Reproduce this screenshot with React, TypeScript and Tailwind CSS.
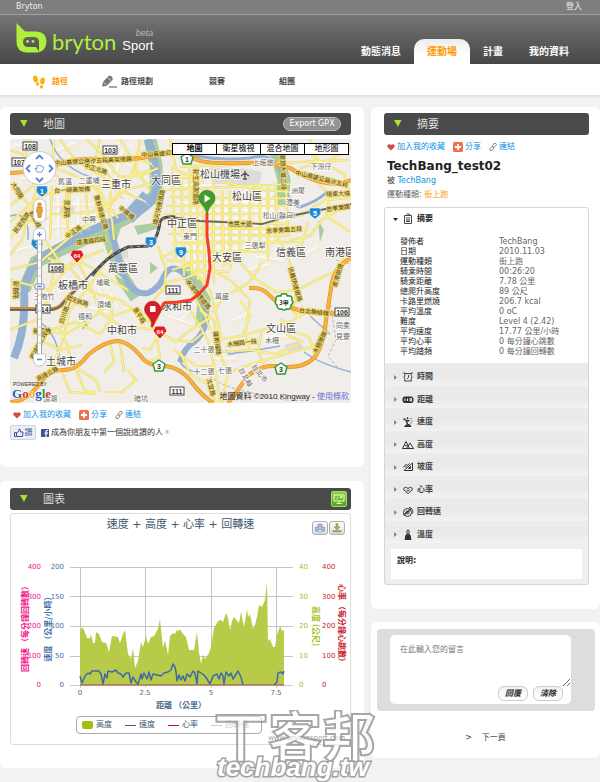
import { useState, type ReactNode } from 'react';

const CJK = '"Noto Sans CJK TC", sans-serif';

interface MapLabel {
  text: string;
  x: number;
  y: number;
  rotate?: number;
}

const DISTRICTS: MapLabel[] = [
  { text: '三重市', x: 116, y: 188 },
  { text: '大同區', x: 166, y: 184 },
  { text: '松山機場', x: 220, y: 178 },
  { text: '松山區', x: 247, y: 200 },
  { text: '中正區', x: 182, y: 227 },
  { text: '大安區', x: 227, y: 261 },
  { text: '信義區', x: 291, y: 256 },
  { text: '南港區', x: 340, y: 256 },
  { text: '萬華區', x: 123, y: 272 },
  { text: '板橋市', x: 73, y: 289 },
  { text: '永和市', x: 177, y: 310 },
  { text: '中和市', x: 122, y: 334 },
  { text: '土城市', x: 61, y: 365 },
  { text: '文山區', x: 281, y: 332 },
];

const PLACES: MapLabel[] = [
  { text: '舊溫', x: 65, y: 184 },
  { text: '二重埔', x: 89, y: 183 },
  { text: '中興', x: 89, y: 222 },
  { text: '埔墘', x: 103, y: 285 },
  { text: '三抱竹', x: 44, y: 299 },
  { text: '頂埔', x: 104, y: 307 },
  { text: '德和', x: 85, y: 319 },
  { text: '頂湖', x: 50, y: 401 },
  { text: '暗坑', x: 141, y: 401 },
  { text: '上塔悠', x: 263, y: 165 },
  { text: '下灣仔', x: 321, y: 169 },
  { text: '洲尾', x: 298, y: 193 },
  { text: '潭美', x: 293, y: 205 },
  { text: '松山(縣口)', x: 279, y: 218 },
  { text: '東門', x: 190, y: 239 },
  { text: '三張犁', x: 255, y: 248 },
  { text: '萬盛', x: 222, y: 299 },
  { text: '二十張', x: 204, y: 352 },
  { text: '十二張', x: 204, y: 374 },
  { text: '七張', x: 225, y: 373 },
  { text: '木柵', x: 272, y: 343 },
  { text: '同柔', x: 343, y: 328 },
  { text: '見寮', x: 343, y: 339 },
  { text: '台北市', x: 260, y: 376, rotate: 52 },
  { text: '台北縣', x: 246, y: 380, rotate: 62 },
];

const ROAD_NAMES: MapLabel[] = [
  { text: '中山高速公路汐五段高架道路', x: 93, y: 163, rotate: -3 },
  { text: '中山高速公', x: 156, y: 156, rotate: -4 },
  { text: '中正北路', x: 96, y: 171, rotate: 18 },
  { text: '台一線高架橋', x: 72, y: 192, rotate: -3 },
  { text: '思源路', x: 68, y: 212, rotate: 90 },
  { text: '中正路', x: 73, y: 234, rotate: -35 },
  { text: '重新高速公路', x: 102, y: 215, rotate: 74 },
  { text: '中興橋', x: 127, y: 215, rotate: 38 },
  { text: '環河快速道路', x: 158, y: 210, rotate: -78 },
  { text: '環漢路四段', x: 91, y: 243, rotate: -8 },
  { text: '大同路', x: 18, y: 193, rotate: 60 },
  { text: '民安西路', x: 21, y: 225, rotate: -55 },
  { text: '新莊路', x: 36, y: 222, rotate: 62 },
  { text: '新樹路', x: 17, y: 293, rotate: 90 },
  { text: '民族路', x: 80, y: 304, rotate: 18 },
  { text: '四川路二段', x: 65, y: 312, rotate: -72 },
  { text: '新海橋', x: 42, y: 333 },
  { text: '擺接路二段', x: 38, y: 348, rotate: -62 },
  { text: '高速公路', x: 47, y: 376, rotate: -28 },
  { text: '新生高架道路', x: 197, y: 190, rotate: 90 },
  { text: '市民大道', x: 240, y: 226 },
  { text: '忠孝東路五段', x: 284, y: 232, rotate: -4 },
  { text: '中山高速公路汐五段', x: 322, y: 181, rotate: 14 },
  { text: '堤頂大道二段', x: 284, y: 175, rotate: 88 },
  { text: '環東大道', x: 338, y: 196, rotate: -3 },
  { text: '忠孝東路', x: 338, y: 210, rotate: -8 },
  { text: '信義快速道路', x: 296, y: 287, rotate: 74 },
  { text: '南港隧道', x: 337, y: 278, rotate: -74 },
  { text: '木柵隧道', x: 319, y: 345, rotate: -64 },
  { text: '台北聯絡線', x: 314, y: 314, rotate: 7 },
  { text: '水源快速道路', x: 199, y: 297, rotate: 52 },
  { text: '景平路', x: 140, y: 318, rotate: 58 },
  { text: '羅斯福路', x: 218, y: 346, rotate: 82 },
  { text: '木柵路一段', x: 242, y: 345, rotate: -7 },
  { text: '北宜路', x: 212, y: 390, rotate: 75 },
];

const PLAIN_ROUTES: MapLabel[] = [
  { text: '108', x: 30, y: 146 },
  { text: '107', x: 19, y: 162 },
  { text: '103', x: 110, y: 150 },
  { text: '106', x: 56, y: 268 },
  { text: '114', x: 43, y: 309 },
  { text: '111', x: 173, y: 290 },
  { text: '111', x: 177, y: 391 },
  { text: '106', x: 342, y: 312 },
];

const BLUE_SHIELDS: MapLabel[] = [
  { text: '1', x: 42, y: 191 },
  { text: '1', x: 37, y: 244 },
  { text: '3', x: 151, y: 242 },
  { text: '9', x: 181, y: 252 },
  { text: '5', x: 315, y: 213 },
];

const RED_SHIELDS: MapLabel[] = [
  { text: '64', x: 77, y: 256 },
  { text: '64', x: 160, y: 332 },
];

const GREEN_SHIELDS: MapLabel[] = [
  { text: '1', x: 187, y: 159 },
  { text: '3', x: 159, y: 366 },
  { text: '3', x: 281, y: 369 },
];

const HIGHWAYS = [
  'M10 173 Q40 172 60 164 T110 160 Q140 160 172 152 Q185 150 195 159 Q205 164 240 163 T290 168 Q305 178 322 182 T351 180',
  'M10 402 Q25 402 38 386 Q48 370 62 370 Q76 371 88 355 Q105 341 118 341 Q130 342 144 360 Q152 367 166 366 Q180 368 190 380 Q200 394 213 403',
  'M228 403 Q240 388 246 378 Q258 365 276 366 Q302 370 314 358 Q324 345 326 320 L332 282 Q336 266 351 258',
  'M249 288 Q262 287 268 294 Q276 303 292 308 Q312 315 345 313',
];

const SMALL_ROADS = [
  'M10 150 L40 160 L70 190 L66 240 L40 262 L10 270',
  'M24 139 L48 165 L90 182 L108 205 L118 218',
  'M10 185 L30 205 L45 240 L60 262',
  'M10 222 L40 196 L72 189 L100 186 L150 170',
  'M60 139 L75 160 L95 172 L120 190 L142 200',
  'M52 214 L92 212 L108 204 L130 182 L138 150',
  'M86 139 L100 152 L118 176 L140 176 L158 168',
  'M40 262 L62 244 L84 226 L104 212 L124 190 L150 184',
  'M30 139 L24 160 L36 190 L22 240 L10 255',
  'M66 192 L68 232 M86 190 L88 226 M52 186 L50 240 M98 186 L112 220 L114 240',
  'M100 139 L96 158 L112 180 L110 200',
  'M120 139 L130 156 L152 164 M140 139 L136 170 L150 190',
  'M10 206 L28 190 L52 166 L54 140',
  'M10 238 L26 222 L50 218',
  'M10 280 L50 290 L72 262 L104 250',
  'M20 403 L44 380 L60 350 L70 310 L94 280 L112 250',
  'M10 330 L36 320 L48 300 L54 270',
  'M48 258 L70 268 L90 292 L120 300 L150 322',
  'M60 270 L82 262 L104 276 L128 290',
  'M78 262 L92 290 L100 312 L120 326 L160 330',
  'M36 330 L66 334 L90 320 L114 300',
  'M30 352 L50 330 L76 322 L100 334 L112 318 L110 296',
  'M58 326 L68 346 L72 366 L96 380 L100 392',
  'M40 340 L60 350 L82 345 M76 368 L84 390 L96 393',
  'M110 342 L114 362 L104 372 M120 342 L124 372',
  'M62 372 L70 392 L96 394 M106 392 L122 392 L136 380 L128 370',
  'M112 316 L138 308 L156 330 L160 358 L146 362',
  'M160 332 L150 350 L142 348 M160 332 L176 342 L190 330 L210 318',
  'M166 300 L190 310 L208 340 L216 374 L220 403',
  'M170 340 L192 342 L204 332 M174 350 L196 366 L214 366',
  'M180 352 L190 374 L208 384 L216 403',
  'M166 260 L186 262 L210 290 L216 312 L222 342',
  'M200 310 L214 320 L218 350 L228 372 L222 403',
  'M216 340 L240 336 L262 330 L290 322 L306 312',
  'M222 352 L250 350 L276 354 L302 342 L286 334',
  'M230 372 L252 364 L300 350 L322 344',
  'M246 330 L250 300 L230 280 L212 270',
  'M262 330 L258 352 L264 364 M240 300 L250 315 L244 332 L250 350',
  'M286 330 L308 336 L316 352 M280 320 L292 324',
  'M280 240 L290 262 L298 290 L292 310 L300 318',
  'M298 290 L316 280 L334 272 L348 252',
  'M298 290 L276 292 L254 278 L240 262',
  'M222 266 L244 250 L262 246 L280 240',
  'M212 312 L226 296 L250 282 L262 262',
  'M154 300 L168 282 L186 278 L206 270',
  'M180 167 L350 160 M290 240 L310 236 L322 220 L351 204',
  'M282 214 L300 216 L325 200 L351 198 M300 168 L330 160 L351 148',
  'M284 146 L310 152 L322 170 M310 139 L318 160 L344 174 L351 200',
  'M318 182 L330 196 L326 216 L351 232 M308 222 L302 244 L290 250',
  'M192 292 L206 318 L210 330 M158 246 L166 270 L164 292',
  'M172 270 L196 262 M160 258 L186 246',
];

const CITY_GRID = [
  'M166 190 L290 184 M170 197 L235 198 M166 206 L290 206 M164 214 L270 214 M164 220 L290 224 M176 228 L296 229',
  'M168 234 L290 236 M172 243 L300 242 M172 252 L270 252 M178 262 L240 262 M186 270 L230 272',
  'M172 166 L176 262 M181 172 L184 276 M189 164 L192 276 M197 166 L198 280 M203 190 L205 284',
  'M213 166 L214 284 M222 190 L224 262 M230 190 L231 270 M240 192 L240 252 M250 184 L250 252',
  'M260 184 L260 250 M268 186 L268 260 M276 184 L278 240 M286 184 L288 236',
  'M166 178 L202 178 M170 139 L176 170 L204 182 M236 200 L290 198 M222 182 L262 190 L290 192',
];

const MINOR_STREETS =
  'M14 145h22M20 178h40M16 250l30 -8M56 150l20 -8M110 145v28M122 150l-8 30M62 276l34 22M58 292l28 -18M88 268l22 40M96 262l26 16M66 300l40 12M104 282l14 24M122 300l18 24M168 316l24 8M180 320l12 -12M210 358h26M184 374l16 16M232 320l18 -8M264 336h28M254 256l30 4M244 270l24 -6M300 256l18 -10M176 185h54M178 202h80M186 210h88M186 218h60M194 226v50M209 190v80M218 200v60M226 196v68M236 206v44M246 190v58M256 188v52M264 190v50M272 190v50M178 238h64M178 248h80M190 258h44M48 196v40M58 196v40M78 196v36M50 204h44M50 226h38M120 160l30 20M130 145l24 22M128 190l18 12';

const TRACK = 'M207 214 L207 236 L209 251 L210 268 L207 285 L199 294 L191 300 L178 302 L164 303 L152 326';

const ALTITUDE =
  'M80 685 L80 632 82 627 84 630 87 638 90 638 91 634 93 643 95 643 96 632 99 634 102 642 106 643 109 652 112 636 118 637 120 643 123 634 125 630 128 654 131 659 133 648 135 668 138 661 141 642 143 647 146 636 148 644 151 637 154 636 158 629 160 619 163 648 165 640 168 655 170 636 173 633 175 634 177 630 179 631 180 629 183 634 186 637 189 650 194 650 197 632 199 652 201 664 203 655 205 659 209 653 211 647 214 628 218 621 221 620 223 622 226 613 228 618 230 630 232 621 234 617 239 623 241 612 244 627 247 609 248 617 250 614 253 629 255 625 257 617 259 605 262 607 265 600 267 582 268 641 270 639 273 647 275 647 277 635 280 626 282 631 284 630 L284 685 Z';

const SPEED =
  'M80 676 L82 683 85 676 88 673 90 674 92 671 95 671 99 671 101 674 103 684 105 674 107 678 108 671 112 672 116 670 118 673 121 674 123 677 126 673 129 673 131 683 133 677 136 682 138 684 141 674 142 679 144 673 147 679 149 672 151 680 153 674 157 675 161 676 164 673 168 672 171 670 173 664 175 667 176 672 177 681 179 675 181 680 183 676 185 681 187 674 190 677 193 671 195 673 197 684 198 671 201 673 204 675 207 679 210 684 213 676 217 674 219 679 221 673 223 676 224 684 226 672 229 676 231 673 233 679 235 676 238 671 241 677 243 685 M274 685 L277 682 278 673 281 672 283 674 284 671';

const SPEED_MARKS = [
  { y: 567, left: '200', outer: '400', alt: '40' },
  { y: 597, left: '150', outer: '300', alt: '30' },
  { y: 626, left: '100', outer: '200', alt: '20' },
  { y: 656, left: '50', outer: '100', alt: '10' },
  { y: 685, left: '0', outer: '0', alt: '0' },
];

const DISTANCE_MARKS = [
  { x: 80, label: '0' },
  { x: 145, label: '2.5' },
  { x: 211, label: '5' },
  { x: 276, label: '7.5' },
];

const SUMMARY = [
  ['發佈者', 'TechBang'],
  ['日期', '2010.11.03'],
  ['運動種類', '街上跑'],
  ['騎乘時間', '00:26:20'],
  ['騎乘距離', '7.78 公里'],
  ['總爬升高度', '89 公尺'],
  ['卡路里燃燒', '206.7 kcal'],
  ['平均溫度', '0 oC'],
  ['難度', 'Level 4 (2.42)'],
  ['平均速度', '17.77 公里/小時'],
  ['平均心率', '0 每分鐘心跳數'],
  ['平均踏頻', '0 每分鐘回轉數'],
];

const SECTIONS: { label: string; icon: ReactNode }[] = [
  {
    label: '時間',
    icon: (
      <path
        d="M2.500 2.500h7L9 4l1 2-1 2.500.5 1.500h-7L3 8.500 2 6l1-2zM1 2.500L2.500 1M11 2.500L9.500 1M6.500 4v2.500L5 8"
        strokeWidth="0.900"
      />
    ),
  },
  {
    label: '距離',
    icon: (
      <>
        <rect x="1" y="3" width="10" height="5.500" rx="1.500" fill="#333" />
        <path d="M3 4.500v2.500M5.500 4.500v2.500M8 4.500h1.500v2.500H8z" stroke="#fff" strokeWidth="0.9" />
      </>
    ),
  },
  {
    label: '速度',
    icon: (
      <>
        <path d="M2.500 10.500h6.500L7.500 8.500 4 9z" fill="#333" />
        <path d="M5.500 8.500L4.500 5 1.500 2.500M4.500 5L7.500 4.500M5 1.500L6 3" strokeWidth="1.400" />
        <path d="M8.500 2.500h1M9.500 5h1M8.500 7h1" />
      </>
    ),
  },
  {
    label: '高度',
    icon: <path d="M0.500 9.500L4 2.500l3.500 7zM4.500 9.500L8 4l3.500 5.500zM2.500 6l1.500 1 1.500-1" />,
  },
  {
    label: '坡度',
    icon: <path d="M2 9.500h8.500V2zM6.500 7.500h2V5.500zM1 6.500L4.500 3M3 6.500L7.500 2.500" />,
  },
  {
    label: '心率',
    icon: <path d="M6 9.500L2 6C1 4 3 2 6 4.500 9 2 11 4 10 6zM4.500 6l1.500 1 1.500-1.500" />,
  },
  {
    label: '回轉速',
    icon: (
      <>
        <circle cx="5.500" cy="6.500" r="4" />
        <circle cx="5.500" cy="6.500" r="1.500" />
        <path d="M3 8.500L8.500 4M7 1.500c3 .5 4.500 3 3.500 6M1 9l9-7" />
      </>
    ),
  },
  {
    label: '溫度',
    icon: (
      <>
        <path d="M5 6V1.500q1-1 2 0V6" />
        <path d="M4 6h4l1 4.500H3z" fill="#333" />
        <path d="M6 4v4" />
      </>
    ),
  },
];

function Panel({ children, className = '' }: { children: ReactNode; className?: string }) {
  return <section className={`rounded-md bg-white ${className}`}>{children}</section>;
}

function PanelTitle({ title, children }: { title: string; children?: ReactNode }) {
  return (
    <div className="flex h-[22px] items-center rounded-[3px] bg-[#4a4a4a] pr-1 pl-[10px]">
      <svg viewBox="0 0 8 8" className="h-2 w-2" aria-hidden="true">
        <path d="M0 0h7.500L4 7z" fill="#a6e22e" />
      </svg>
      <h2 className="ml-[15px] flex-1 pt-[2px] text-[11px] leading-4 text-[#dedede]">{title}</h2>
      {children}
    </div>
  );
}

function ActionLinks() {
  return (
    <div className="flex h-3 items-center pl-[3px] text-[8px] leading-3 text-[#0a93e6]">
      <a href="#favorite" className="flex items-center gap-[2px]">
        <svg viewBox="0 0 8 8" className="h-2 w-2" aria-hidden="true">
          <path d="M4 7.500L.5 4C-.5 2 2 0 4 2 6 0 8.500 2 7.500 4z" fill="#d24a43" />
        </svg>
        加入我的收藏
      </a>
      <a href="#share" className="ml-2 flex items-center gap-[2px]">
        <svg viewBox="0 0 10 10" className="h-[10px] w-[10px]" aria-hidden="true">
          <rect width="10" height="10" rx="1.500" fill="#f0714c" />
          <path d="M5 2v6M2 5h6" stroke="#fff" strokeWidth="1.800" />
        </svg>
        分享
      </a>
      <a href="#link" className="ml-2 flex items-center gap-[2px]">
        <svg viewBox="0 0 9 9" className="h-2 w-2" fill="none" stroke="#777" aria-hidden="true">
          <rect x="3.500" y="1" width="5" height="3" rx="1.500" transform="rotate(-42 6 2.500)" />
          <rect x="0.500" y="5" width="5" height="3" rx="1.500" transform="rotate(-42 3 6.500)" />
        </svg>
        連結
      </a>
    </div>
  );
}

function Logo() {
  return (
    <a href="#home" className="flex items-start" aria-label="bryton Sport">
      <svg viewBox="0 0 31 30" className="h-[30px] w-[31px]" aria-hidden="true">
        <path
          fillRule="evenodd"
          fill="#aef03a"
          d="M.5 0L9 8.500H20Q30.500 9 30.500 18.500 30 28 22 29.500H11Q.5 29 .5 19zM12.500 14Q7 14 7 19t5.500 5H20l3 4.500V18.500q-.5-4.500-5-4.500z"
        />
        <circle cx="11.500" cy="18.500" r="1.400" fill="#aef03a" />
        <circle cx="17" cy="18.500" r="1.400" fill="#aef03a" />
      </svg>
      <span className="mt-[9px] ml-[5px] font-[Lato,sans-serif] text-[22px] leading-5 text-[#aef03a]">bryton</span>
      <span className="mt-[6px] ml-[6px] flex flex-col font-['Liberation_Sans',sans-serif]">
        <span className="text-right text-[9px] leading-[9px] text-[#bbb] italic">beta</span>
        <span className="text-[13px] leading-4 text-white">Sport</span>
      </span>
    </a>
  );
}

function Header() {
  return (
    <header>
      <div className="flex h-[15px] items-center justify-between border-b border-[#a0a0a0] bg-[#7e7e7e] pr-[18px] pl-4 text-[8px] text-[#eee]">
        <a href="#bryton">Bryton</a>
        <a href="#login">登入</a>
      </div>
      <div className="flex h-[49px] justify-between bg-linear-to-b from-[#757575] to-[#474747] pr-[18px] pl-4">
        <div className="pt-2">
          <Logo />
        </div>
        <nav className="flex items-end text-[10px] font-bold text-white" aria-label="主選單">
          <a href="#news" className="flex h-[25px] items-center px-[13px]">動態消息</a>
          <a
            href="#field"
            aria-current="page"
            className="flex h-[25px] items-center rounded-t-[10px] bg-linear-to-b from-[#ececec] to-white to-60% px-[13px] text-[#ff9800]"
          >
            運動場
          </a>
          <a href="#plan" className="flex h-[25px] items-center px-[13px]">計畫</a>
          <a href="#profile" className="flex h-[25px] items-center px-[13px]">我的資料</a>
        </nav>
      </div>
      <nav
        className="flex h-[31px] items-center bg-white pt-1 pl-8 text-[8px] font-bold text-[#444] shadow-[0_1px_3px_rgba(0,0,0,0.12)]"
        aria-label="運動場"
      >
        <a href="#route" className="flex w-[69px] items-center gap-[6px] text-[#ff9800]">
          <svg viewBox="0 0 14 14" className="h-[14px] w-[14px]" fill="#ffb000" aria-hidden="true">
            <ellipse cx="3.500" cy="4" rx="2.300" ry="3.500" transform="rotate(-12 3.500 4)" />
            <ellipse cx="5.500" cy="9" rx="1.500" ry="1.700" />
            <ellipse cx="10.500" cy="6" rx="2.300" ry="3.500" transform="rotate(10 10.500 6)" />
            <ellipse cx="9.500" cy="12" rx="1.600" ry="1.700" />
          </svg>
          路徑
        </a>
        <a href="#planner" className="flex w-[108px] items-center gap-1">
          <svg viewBox="0 0 16 14" className="h-[14px] w-4" aria-hidden="true">
            <path d="M1 11.500L2 7 7.500 1q1-1 3 .5T11.500 5L5.500 11z" fill="#777" />
            <path d="M3 7.500l2.500 2.500M6.500 2.500L10 5.500" stroke="#ddd" />
            <path d="M8 12h8" stroke="#888" strokeWidth="1.500" />
          </svg>
          路徑規劃
        </a>
        <a href="#race" className="w-[70px]">競賽</a>
        <a href="#group">組團</a>
      </nav>
    </header>
  );
}

function MapText({ items, size, color, halo = '#fff' }: { items: MapLabel[]; size: number; color: string; halo?: string }) {
  return (
    <g
      fontFamily={CJK}
      fontSize={size}
      fill={color}
      textAnchor="middle"
      stroke={halo}
      strokeWidth="2"
      strokeOpacity="0.75"
      paintOrder="stroke"
    >
      {items.map(({ text, x, y, rotate }) => (
        <text key={`${text}-${x}`} x={x} y={y} transform={rotate ? `rotate(${rotate} ${x} ${y - 3})` : undefined}>
          {text}
        </text>
      ))}
    </g>
  );
}

function RouteMap() {
  const [mode, setMode] = useState('地圖');

  return (
    <div className="relative mt-1 overflow-hidden rounded-[3px]">
      <svg viewBox="10 139 341 264" className="block w-full" role="img" aria-label="路線地圖" fill="none">
        <rect x="10" y="139" width="341" height="264" fill="#f1ede8" />
        <path
          d="M206 168 Q240 166 262 172 L260 184 L214 188z M60 206h14v8h-14z M118 250h10v8h-10z M270 196l14-4 4 10z M284 345l16-4 4 8-16 4z M176 145h22v10z"
          fill="#dedcda"
        />
        <path
          d="M150 139 L156 165 156 195 130 216 92 236 60 250 36 262 24 290 M116 222 L110 240 122 276 136 298 M186 268 L204 300 202 326 M276 152 L284 180 282 206"
          stroke="#a9cda0"
          strokeWidth="13"
        />
        <path d="M318 220l6 10-4 12zM84 316l4 10-6 4zM134 226l20-3 8 4-24 8zM150 262l8 6-8 6z" fill="#a9cda0" />
        <g stroke="#94b0d2">
          <path
            d="M148 139 Q155 160 157 180 Q158 200 140 210 Q110 222 92 230 Q60 246 44 256 Q28 266 24 294 Q26 330 14 358"
            strokeWidth="8"
          />
          <path
            d="M110 225 Q116 250 122 272 Q132 296 148 293 Q160 288 164 276 Q172 262 184 274 Q202 292 206 320 Q204 334 194 342 Q184 348 180 362"
            strokeWidth="6"
          />
          <path d="M148 196l-20 22" strokeWidth="14" />
          <path d="M176 150 Q205 162 250 158 Q274 152 280 172 Q288 206 300 207 Q316 202 326 193" strokeWidth="3" />
          <path
            d="M50 139 Q60 170 100 180 M180 362 Q186 372 200 372 M228 354 Q260 350 280 346 M304 352 Q320 364 351 372 M10 216 Q30 210 28 240 M36 320 Q56 330 60 360 M226 350q4 8 14 0 M310 316l20 18"
            strokeWidth="1.500"
          />
        </g>
        <path d="M336 260l15 4M330 300l6 40-8 16 10 12M210 376q14 12 40 16 26 10 60 8M104 178l20 22" stroke="#b5b1ad" strokeDasharray="3 2" />
        <path d={MINOR_STREETS} stroke="#fff" strokeWidth="1" />
        <path d={MINOR_STREETS} stroke="#f3e88c" strokeWidth="0.6" transform="translate(3 3)" />
        {[...SMALL_ROADS, ...CITY_GRID].map((d) => (
          <path key={d} d={d} stroke="#d9cc78" strokeWidth="2.200" strokeLinejoin="round" />
        ))}
        {[...SMALL_ROADS, ...CITY_GRID].map((d) => (
          <path key={d} d={d} stroke="#fbf184" strokeWidth="1.600" strokeLinejoin="round" />
        ))}
        <path d="M10 309 H44 Q58 311 64 302 Q74 290 82 284" stroke="#c98f30" strokeWidth="4" />
        <path
          d="M10 310 H46 Q58 311 64 302 L84 282 Q100 262 128 247 L148 246 Q157 242 160 222 Q162 216 170 217 L200 221 L262 224 L290 216 L351 204"
          stroke="#6b6764"
          strokeWidth="1.800"
        />
        <path d="M92 276 Q106 256 128 247 L148 246 Q157 242 160 222 Q162 216 175 217" stroke="#4c4a4c" strokeWidth="3" />
        <path d="M92 276 Q106 256 128 247 L148 246 Q157 242 160 222 Q162 216 175 217" stroke="#aaa" strokeDasharray="3 4" />
        {HIGHWAYS.map((d) => (
          <path key={d} d={d} stroke="#cf8b2b" strokeWidth="4" />
        ))}
        {HIGHWAYS.map((d) => (
          <path key={d} d={d} stroke="#f9b13c" strokeWidth="3" />
        ))}

        <MapText items={ROAD_NAMES} size={6} color="#4a3c10" halo="#f6df70" />
        <MapText items={PLACES} size={7} color="#666" />
        <MapText items={DISTRICTS} size={10} color="#444" />
        <path d="M245 171v8M241 176l4-3 4 3M243 179h4" stroke="#555" strokeWidth="1.400" />

        <g fontFamily="Liberation Sans" fontSize="7" fontWeight="bold" textAnchor="middle">
          {PLAIN_ROUTES.map(({ text, x, y }) => (
            <g key={`${x}-${y}`}>
              <rect x={x - 7} y={y - 4} width="14" height="8" fill="#fff" stroke="#444" />
              <text x={x} y={y + 3} fill="#333">{text}</text>
            </g>
          ))}
          {BLUE_SHIELDS.map(({ text, x, y }) => (
            <g key={`${x}-${y}`}>
              <path d={`M${x - 5} ${y - 5}h10q2 5-1 8l-4 3-4-3q-3-3-1-8z`} fill="#1f86cf" stroke="#fff" strokeWidth="0.5" />
              <text x={x} y={y + 3} fill="#fff">{text}</text>
            </g>
          ))}
          {RED_SHIELDS.map(({ text, x, y }) => (
            <g key={`${x}-${y}`}>
              <path d={`M${x - 4} ${y - 5}h8l2 4-6 7-6-7z`} fill="#e31b23" stroke="#e31b23" strokeLinejoin="round" />
              <text x={x} y={y + 2} fontSize="6" fill="#fff">{text}</text>
            </g>
          ))}
          {GREEN_SHIELDS.map(({ text, x, y }) => (
            <g key={`${x}-${y}`}>
              <path d={`M${x} ${y - 6}l6 4-2 7h-8l-2-7z`} fill="#fff" stroke="#2e9a3c" strokeWidth="1.500" strokeLinejoin="round" />
              <text x={x} y={y + 3} fill="#333">{text}</text>
            </g>
          ))}
          <path
            d="M284 294q3-1 3 2 6-1 5 4 2 3-1 5 0 5-5 4-2 2-4 0-5 1-5-4-3-2-1-5-1-5 5-4 0-3 3-2z"
            fill="#fff"
            stroke="#2e9a3c"
            strokeWidth="1.600"
            strokeLinejoin="round"
          />
          <text x="284" y="305" fontFamily={CJK} fontSize="6" fill="#333">3甲</text>
        </g>

        <path d={TRACK} stroke="#f33b2e" strokeWidth="3" strokeLinejoin="round" strokeLinecap="round" />
        <path d="M207 214Q205 207 201 203.500A8 8 0 1 1 213 203.500Q209 207 207 214z" fill="#3f9c2b" stroke="#2c7a1e" strokeWidth="0.600" />
        <path d="M204.500 194.500v8l6-4z" fill="#fff" />
        <path d="M152.500 326Q151 319 147 315A8 8 0 1 1 158 315Q154 319 152.500 326z" fill="#d51f26" stroke="#a3151b" strokeWidth="0.600" />
        <rect x="150" y="306" width="5.500" height="6" fill="#fff" />

        <g stroke="#c9c9c9">
          <circle cx="39.500" cy="168" r="16.500" fill="#fff" />
          <rect x="33.500" y="199" width="12.500" height="23" rx="6" fill="#fff" />
          <rect x="37.500" y="238" width="4" height="118" fill="#fff" stroke="#aaa" />
          <path d="M37.500 244h4M37.500 252h4M37.500 260h4M37.500 268h4M37.500 276h4M37.500 295h4M37.500 303h4M37.500 311h4M37.500 319h4M37.500 327h4M37.500 335h4M37.500 343h4" />
          <path d="M33.500 240v-6q0-6 6-6t6 6v6z" fill="#fff" />
          <path d="M33.500 354h12v6q-1 6-6 6t-6-6z" fill="#fff" />
          <rect x="35" y="284" width="9" height="5" rx="1" fill="#fff" stroke="#88a" />
        </g>
        <g stroke="#5b86cf" strokeWidth="1.800">
          <path d="M36 159l3.500-3.500 3.500 3.500M36 178l3.500 3.500 3.500-3.500M30 165l-3.500 3.500 3.500 3.500M49 165l3.500 3.500-3.500 3.500" />
          <path d="M37 234.500h5M39.500 232v5M37 359.500h5M37 286.500h5" strokeWidth="1.300" />
          <path d="M37 172l-2-4 2 1v-3q1-2 1.500 0 1-2 2 0 1-1 1.500.5 2-.5 1.500 2l-1.500 3.500z" strokeWidth="0.800" fill="#fff" />
        </g>
        <circle cx="39.500" cy="204.500" r="2.200" fill="#e8932c" />
        <path d="M37 207h5l.5 5-1 .5-.5 5h-3l-.5-5-1-.5z" fill="#f0a030" stroke="#a8641a" strokeWidth="0.500" />

        <text x="13" y="386" fontFamily="Liberation Sans" fontSize="5" fill="#333">POWERED BY</text>
        <text x="12" y="398" fontFamily="Liberation Serif" fontSize="13" fontWeight="bold" stroke="#fff" strokeWidth="1" paintOrder="stroke">
          <tspan fill="#2a56c6">G</tspan>
          <tspan fill="#d8322b">o</tspan>
          <tspan fill="#e8b21a">o</tspan>
          <tspan fill="#2a56c6">g</tspan>
          <tspan fill="#2c9a3c">l</tspan>
          <tspan fill="#d8322b">e</tspan>
        </text>
        <text x="349" y="399" textAnchor="end" fontFamily={`"Liberation Sans", ${CJK}`} fontSize="8" fill="#222">
          地圖資料 ©2010 Kingway - <tspan fill="#6a6ad8">使用條款</tspan>
        </text>
      </svg>
      <div className="absolute top-1 right-[2px] flex text-[8px] leading-[10px] text-black">
        {['地圖', '衛星檢視', '混合地圖', '地形圖'].map((name) => (
          <button
            key={name}
            type="button"
            aria-pressed={mode === name}
            onClick={() => setMode(name)}
            className={`-ml-px h-3 w-[45px] border border-black bg-white ${mode === name ? 'font-bold' : ''}`}
          >
            {name}
          </button>
        ))}
      </div>
    </div>
  );
}

function RideChart() {
  return (
    <div className="relative mt-[3px] rounded-[3px] border border-[#ddd] shadow-[0_0_1px_rgba(0,0,0,0.1)]">
      <h3 className="h-[22px] text-center text-[11px] leading-[22px] text-[#3e576f]">速度 + 高度 + 心率 + 回轉速</h3>
      <div className="absolute top-[7px] right-[5px] flex gap-px">
        <button type="button" aria-label="列印" className="flex h-[14px] w-4 items-center justify-center rounded-[3px] border border-[#b0b0b0] bg-linear-to-b from-white to-[#ddd]">
          <svg viewBox="0 0 10 10" className="h-[10px] w-[10px]" aria-hidden="true">
            <path d="M3 1h4v3h2.500v4H.5V4H3z" fill="#a4bdd8" stroke="#6f8ead" strokeWidth="0.600" />
            <path d="M3 6.500h4V9H3z" fill="#d9e5f0" stroke="#6f8ead" strokeWidth="0.500" />
          </svg>
        </button>
        <button type="button" aria-label="下載" className="flex h-[14px] w-4 items-center justify-center rounded-[3px] border border-[#b0b0b0] bg-linear-to-b from-white to-[#ddd]">
          <svg viewBox="0 0 10 10" className="h-[10px] w-[10px]" aria-hidden="true">
            <path d="M4 .5h2V4h2L5 7 2 4h2zM1 7v2h8V7" fill="#a0af72" stroke="#8a9a58" strokeWidth="0.600" />
          </svg>
        </button>
      </div>
      <svg viewBox="11 536 339 180" className="block w-full" role="img" aria-label="速度與高度圖表" fill="none">
        <path d="M70 567.500H293M70 596.500H293M70 626.500H293M70 656.500H293M80.500 567V685M145.500 567V685M211.500 567V685M276.500 567V685" stroke="#c4c4c4" />
        <path d={ALTITUDE} fill="#b7cb48" />
        <path d={SPEED} stroke="#4169a8" strokeWidth="1.500" strokeLinejoin="round" />
        <path d="M70 685.500H293M80.500 685v3M145.500 685v3M211.500 685v3M276.500 685v3" stroke="#c0d0e0" />
        <path d="M80 685H284" stroke="#b0483c" strokeWidth="1.200" />
        <g fontFamily={`"DejaVu Sans", ${CJK}`} fontSize="7">
          {SPEED_MARKS.map(({ y, left, outer, alt }) => (
            <g key={y}>
              <text x="41" y={y + 2} textAnchor="end" fill="#f0148c">{outer}</text>
              <text x="64" y={y + 2} textAnchor="end" fill="#4572a7">{left}</text>
              <text x="299" y={y + 2} fill="#a5c01c">{alt}</text>
              <text x="322" y={y + 2} fill="#c8232c">{outer}</text>
            </g>
          ))}
          {DISTANCE_MARKS.map(({ x, label }) => (
            <text key={x} x={x} y="695" textAnchor="middle" fill="#666">{label}</text>
          ))}
        </g>
        <g fontFamily={CJK} fontSize="8" fontWeight="bold" textAnchor="middle">
          <text transform="translate(28 627) rotate(-90)" fill="#f0148c">回轉速 （每分鐘回轉數）</text>
          <text transform="translate(51 627) rotate(-90)" fill="#4572a7">速度 （公里/小時）</text>
          <text transform="translate(313 626) rotate(90)" fill="#a5c01c">高度 (公尺)</text>
          <text transform="translate(339 625) rotate(90)" fill="#c8232c">心率 （每分鐘心跳數）</text>
          <text x="181" y="708" fill="#4a6b92">距離 （公里）</text>
        </g>
      </svg>
      <ul className="ml-[65px] flex h-[18px] w-[186px] items-center rounded-[4px] border border-[#aaa] pl-[5px] text-[8px] text-[#3e576f]">
        <li className="flex w-[43px] items-center gap-[3px]">
          <span className="h-2 w-[11px] rounded-[2px] bg-[#a3bd11]" />高度
        </li>
        <li className="flex w-[43px] items-center gap-[3px]">
          <span className="h-px w-[11px] bg-[#2f62a8]" />速度
        </li>
        <li className="flex w-[43px] items-center gap-[3px]">
          <span className="h-px w-[11px] bg-[#d0101c]" />心率
        </li>
        <li className="flex items-center gap-[3px] text-[#ccc]">
          <span className="h-px w-[11px] bg-[#ccc]" />回轉速
        </li>
      </ul>
      <p className="h-[10px] pr-[5px] text-right text-[7px] leading-[9px] text-[#999]">www.brytonsport.com</p>
    </div>
  );
}

function Summary() {
  const [open, setOpen] = useState(true);

  return (
    <div className="mt-[6px] rounded-[3px] border border-[#d6d6d6] bg-[#efefef]">
      <div className="rounded-t-[3px] bg-white pb-[6px]">
        <button
          type="button"
          aria-expanded={open}
          onClick={() => setOpen(!open)}
          className="flex h-[22px] w-full items-center pl-2 text-[8px] font-bold text-[#222]"
        >
          <svg viewBox="0 0 5 5" className="h-[5px] w-[5px]" aria-hidden="true">
            <path d="M0 1h5L2.500 4z" fill="#222" />
          </svg>
          <svg viewBox="0 0 12 12" className="ml-1 h-3 w-3" fill="none" stroke="#444" aria-hidden="true">
            <path d="M2.500 2.500h7v8h-7zM4.500 1h3v1.500M4 5h4M4 7h4M4 8.500h4" />
          </svg>
          <span className="ml-[3px]">摘要</span>
        </button>
        {open && (
          <table className="ml-[15px] text-[8px] leading-[10px]">
            <tbody className="before:block before:h-[7px]">
              {SUMMARY.map(([label, value]) => (
                <tr key={label}>
                  <th scope="row" className="w-[99px] p-0 text-left font-normal text-[#222]">{label}</th>
                  <td className="p-0 whitespace-nowrap text-[#666]">{value}</td>
                </tr>
              ))}
            </tbody>
          </table>
        )}
      </div>
      <ul className="flex h-[180px] flex-col">
        {SECTIONS.map(({ label, icon }) => (
          <li key={label} className="flex-1 bg-linear-to-b from-[#ececec] via-[#e9e9e9] to-[#f2f2f2]">
            <button type="button" aria-expanded="false" className="flex h-full w-full items-center pt-[6px] pl-2 text-[8px] font-bold text-[#444]">
              <svg viewBox="0 0 5 5" className="h-[5px] w-[5px]" aria-hidden="true">
                <path d="M1 0v5l3-2.500z" fill="#888" />
              </svg>
              <svg viewBox="0 0 12 12" className="ml-1 h-3 w-3" fill="none" stroke="#333" aria-hidden="true">
                {icon}
              </svg>
              <span className="ml-[3px]">{label}</span>
            </button>
          </li>
        ))}
      </ul>
      <div className="mx-[6px] mt-[6px] mb-[5px] h-[30px] bg-white px-[6px] pt-[6px] text-[8px] leading-3 font-bold text-[#222]">說明:</div>
    </div>
  );
}

function Comments() {
  return (
    <>
      <form className="mr-[5px] ml-[6px] rounded-[4px] bg-[#ddd] pt-[6px] pr-6 pb-[7px] pl-[13px]" onSubmit={(e) => e.preventDefault()}>
        <div className="rounded-[5px] bg-white pb-[3px]">
          <textarea
            aria-label="留言"
            placeholder="在此輸入您的留言"
            className="block h-[52px] w-full px-[10px] pt-[9px] text-[8px] leading-3 outline-none placeholder:text-[#777]"
          />
          <div className="-mt-px flex justify-end gap-[5px] pr-2">
            <button type="submit" className="h-[15px] w-[30px] rounded-[6px] border border-[#ccc] bg-linear-to-b from-[#f2f2f2] to-white text-[8px] leading-3 font-bold text-[#222] italic">
              回覆
            </button>
            <button type="reset" className="h-[15px] w-[30px] rounded-[6px] border border-[#ccc] bg-linear-to-b from-[#f2f2f2] to-white text-[8px] leading-3 font-bold text-[#222] italic">
              清除
            </button>
          </div>
        </div>
      </form>
      <nav className="mt-[19px] flex h-4 items-center justify-center text-[8px] text-[#444]" aria-label="分頁">
        <a href="#next" className="flex items-center gap-[10px]">
          <span>&gt;</span>
          <span>下一頁</span>
        </a>
      </nav>
    </>
  );
}

function Watermark() {
  return (
    <svg viewBox="0 0 170 72" className="pointer-events-none absolute bottom-0 left-[212px] h-[72px] w-[170px]" aria-hidden="true">
      <text
        x="2"
        y="47"
        fontFamily={CJK}
        fontSize="54"
        fontWeight="bold"
        fill="#fff"
        fillOpacity="0.5"
        stroke="#8a8a8a"
        strokeOpacity="0.75"
        strokeWidth="2"
      >
        丅客邦
      </text>
      <g fontFamily="Liberation Sans" fontSize="26" fontWeight="bold" fontStyle="italic">
        <text x="5" y="66" fill="#a2a2a2" stroke="#a2a2a2" strokeWidth="3">techbang.tw</text>
        <text x="5" y="66" fill="#fff">techbang.tw</text>
      </g>
    </svg>
  );
}

export default function App() {
  return (
    <div className="relative min-h-screen overflow-hidden bg-[#f2f2f2] font-['DejaVu_Sans','Noto_Sans_CJK_TC',sans-serif]">
      <Header />
      <main className="grid grid-cols-[364fr_229fr] items-start gap-[7px] pt-3">
        <div className="flex flex-col gap-[14px]">
          <Panel className="pt-[6px] pr-[13px] pb-[27px] pl-[10px]">
            <PanelTitle title="地圖">
              <button type="button" className="mr-[6px] h-[14px] w-[58px] rounded-full border border-[#bbb] bg-[#929292] text-[8px] leading-3 text-white">
                Export GPX
              </button>
            </PanelTitle>
            <RouteMap />
            <div className="mt-[6px]">
              <ActionLinks />
            </div>
            <div className="mt-1 flex h-[15px] items-center text-[8px] leading-3 text-[#333]">
              <button type="button" className="flex h-[15px] w-[26px] items-center justify-center gap-px rounded-[2px] border border-[#cad4e7] bg-[#eceef5] text-[#3b5998]">
                <svg viewBox="0 0 10 10" className="h-[10px] w-[10px]" fill="none" stroke="#3b5998" aria-hidden="true">
                  <path d="M.5 4.500h2v4h-2zM2.500 5L5 3V1q1.500 0 1.500 1.500V4H9l-.5 4.500H2.500" />
                </svg>
                讚
              </button>
              <svg viewBox="0 0 8 8" className="mr-[2px] ml-[5px] h-2 w-2" aria-hidden="true">
                <rect width="8" height="8" fill="#3b5998" />
                <path d="M7 1.500H6q-1 0-1 1V8M3.500 4.200H7" stroke="#fff" strokeWidth="1.200" fill="none" />
              </svg>
              成為你朋友中第一個說這讚的人。
            </div>
          </Panel>
          <Panel className="pt-[7px] pr-[13px] pb-[23px] pl-[10px]">
            <PanelTitle title="圖表">
              <button type="button" aria-label="全螢幕" className="flex h-4 w-4 items-center justify-center rounded-[2px] border border-[#9edb62] bg-linear-to-b from-[#8ed63e] to-[#53a51c]">
                <svg viewBox="0 0 12 12" className="h-3 w-3" fill="none" stroke="#e8ffd4" aria-hidden="true">
                  <path d="M1 2h10v6H1zM6 8v2M3.500 10.500h5M3.500 6l2-1.500M7 5l2-1.500M7.500 3.500H9V5" />
                </svg>
              </button>
            </PanelTitle>
            <RideChart />
          </Panel>
        </div>
        <div className="flex flex-col gap-[13px]">
          <Panel className="pt-[6px] pr-[11px] pb-6 pl-[13px]">
            <PanelTitle title="摘要" />
            <div className="mt-[6px]">
              <ActionLinks />
            </div>
            <h1 className="mt-[5px] pl-[3px] text-[12px] leading-4 font-bold text-[#222]">TechBang_test02</h1>
            <p className="mt-px pl-[3px] text-[8px] leading-3 text-[#333]">
              被 <a href="#techbang" className="text-[#0a93e6]">TechBang</a>
            </p>
            <p className="mt-[2px] pl-[3px] text-[8px] leading-3 text-[#666]">
              運動種類: <a href="#running" className="text-[#ff9800]">街上跑</a>
            </p>
            <Summary />
          </Panel>
          <Panel className="pt-[7px] pb-3">
            <Comments />
          </Panel>
        </div>
      </main>
      <Watermark />
    </div>
  );
}
